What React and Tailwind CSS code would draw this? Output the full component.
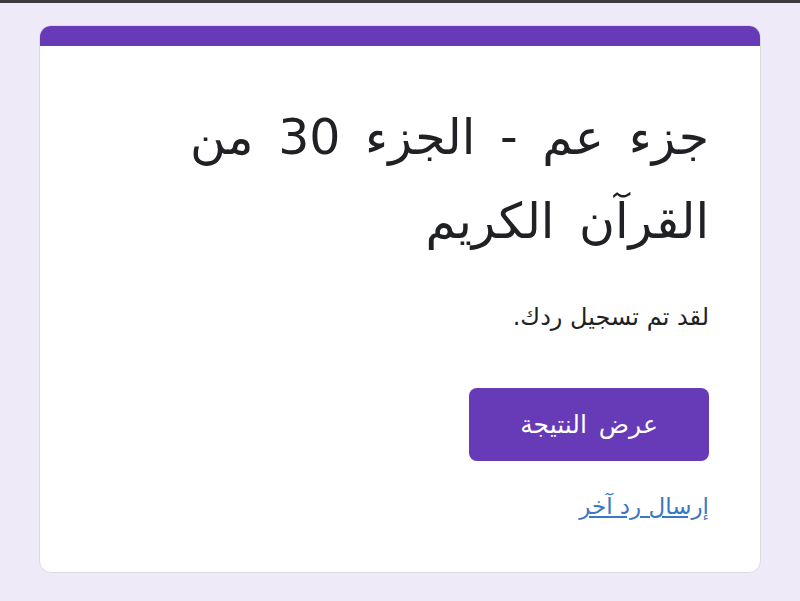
export default function App() {
  return (
    <div
      dir="rtl"
      className="w-[800px] h-[601px] bg-[#efeaf8] overflow-hidden relative"
      style={{ fontFamily: '"DejaVu Sans", sans-serif' }}
    >
      <div className="h-[3px] bg-[#3c3c40]" />
      <div className="pt-[22px] px-[39px]">
        <div className="w-[722px] h-[548px] rounded-[12px] bg-white border border-[#dadce0] overflow-hidden flex flex-col">
          <div className="h-[21px] bg-[#673ab7] -mx-px -mt-px" />
          <div className="pr-[51px] pl-[40px] pt-[50px]">
            <h1 className="text-[49px] leading-[84px] text-[#202124] font-normal [word-spacing:9px]">
              جزء عم - الجزء 30 من
              <br />
              القرآن الكريم
            </h1>
            <p className="mt-[36px] text-[24px] leading-[34px] text-[#202124]">لقد تم تسجيل ردك.</p>
            <button className="mt-[54px] w-[240px] h-[73px] rounded-[8px] bg-[#673ab7] text-white text-[25px] [word-spacing:4px]">
              عرض النتيجة
            </button>
            <div className="mt-[28px]">
              <a href="#" className="text-[23px] leading-[34px] text-[#3b78c2] underline">إرسال رد آخر</a>
            </div>
          </div>
        </div>
      </div>
    </div>
  );
}
